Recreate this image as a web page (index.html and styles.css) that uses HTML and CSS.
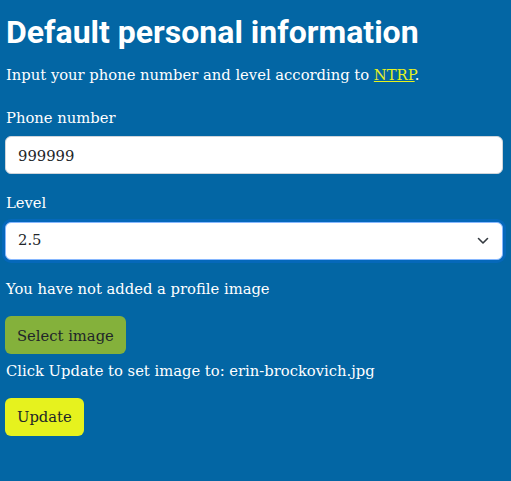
FILE: index.html
```html
<!DOCTYPE html>
<html lang="en">
<head>
<meta charset="utf-8">
<title>Default personal information</title>
<link rel="stylesheet" href="styles.css">
</head>
<body>
<main class="page">
  <h1 class="title">Default personal information</h1>
  <p class="intro">Input your phone number and level according to <a href="#" class="link">NTRP</a>.</p>
  <div class="field">
    <label class="label" for="phone">Phone number</label>
    <input class="control" id="phone" type="text" value="999999">
  </div>
  <div class="field">
    <label class="label" for="level">Level</label>
    <div class="select-wrap">
      <div class="control select" id="level">2.5</div>
      <svg class="chevron" width="12" height="8" viewBox="0 0 12 8"><path d="M1.5 1.5l4.5 4.5 4.5-4.5" fill="none" stroke="#343a40" stroke-width="1.6" stroke-linecap="round" stroke-linejoin="round"/></svg>
    </div>
  </div>
  <p class="text status">You have not added a profile image</p>
  <button class="btn btn-green">Select image</button>
  <p class="text hint">Click Update to set image to: erin-brockovich.jpg</p>
  <button class="btn btn-yellow">Update</button>
</main>
</body>
</html>
```
FILE: styles.css
```css
html, body {
  margin: 0;
  padding: 0;
  background: #0366a4;
}
body {
  color: #ffffff;
  font-family: "DejaVu Serif", "Liberation Serif", serif;
  font-size: 14.75px;
  line-height: 22.5px;
}
.page {
  padding: 12px 8px 0 5px;
  display: flex;
  flex-direction: column;
  align-items: flex-start;
}
.title {
  margin: 0;
  font-family: Roboto, "Noto Sans", sans-serif;
  font-weight: 700;
  font-size: 32px;
  line-height: 40px;
  padding-left: 1px;
}
.intro {
  margin: 12px 0 0 1px;
}
.link {
  color: #e6f21e;
  text-decoration: underline;
}
.field {
  align-self: stretch;
  display: flex;
  flex-direction: column;
  margin-top: 20px;
}
.field + .field {
  margin-top: 18px;
}
.label {
  margin: 0 0 7px 1px;
}
.control {
  box-sizing: border-box;
  width: 100%;
  height: 38px;
  margin: 0;
  padding: 0 12px;
  border: 1px solid #ced4da;
  border-radius: 6px;
  background: #ffffff;
  color: #212529;
  font-family: "DejaVu Serif", "Liberation Serif", serif;
  font-size: 14.75px;
  outline: none;
}
.select-wrap {
  position: relative;
}
.select {
  display: flex;
  align-items: center;
  border-color: #86b7fe;
  box-shadow: 0 0 0 3px rgba(13, 110, 253, 0.25);
}
.chevron {
  position: absolute;
  right: 14px;
  top: 15px;
}
.text {
  margin: 0 0 0 1px;
}
.status {
  margin-top: 18px;
}
.btn {
  height: 38px;
  padding: 0 12px;
  border: none;
  border-radius: 6px;
  color: #212529;
  font-family: "DejaVu Serif", "Liberation Serif", serif;
  font-size: 14.75px;
  cursor: pointer;
}
.btn-green {
  background: #84b13b;
  margin-top: 16px;
}
.hint {
  margin-top: 6px;
}
.btn-yellow {
  background: #e6f21e;
  margin-top: 15px;
}
```
